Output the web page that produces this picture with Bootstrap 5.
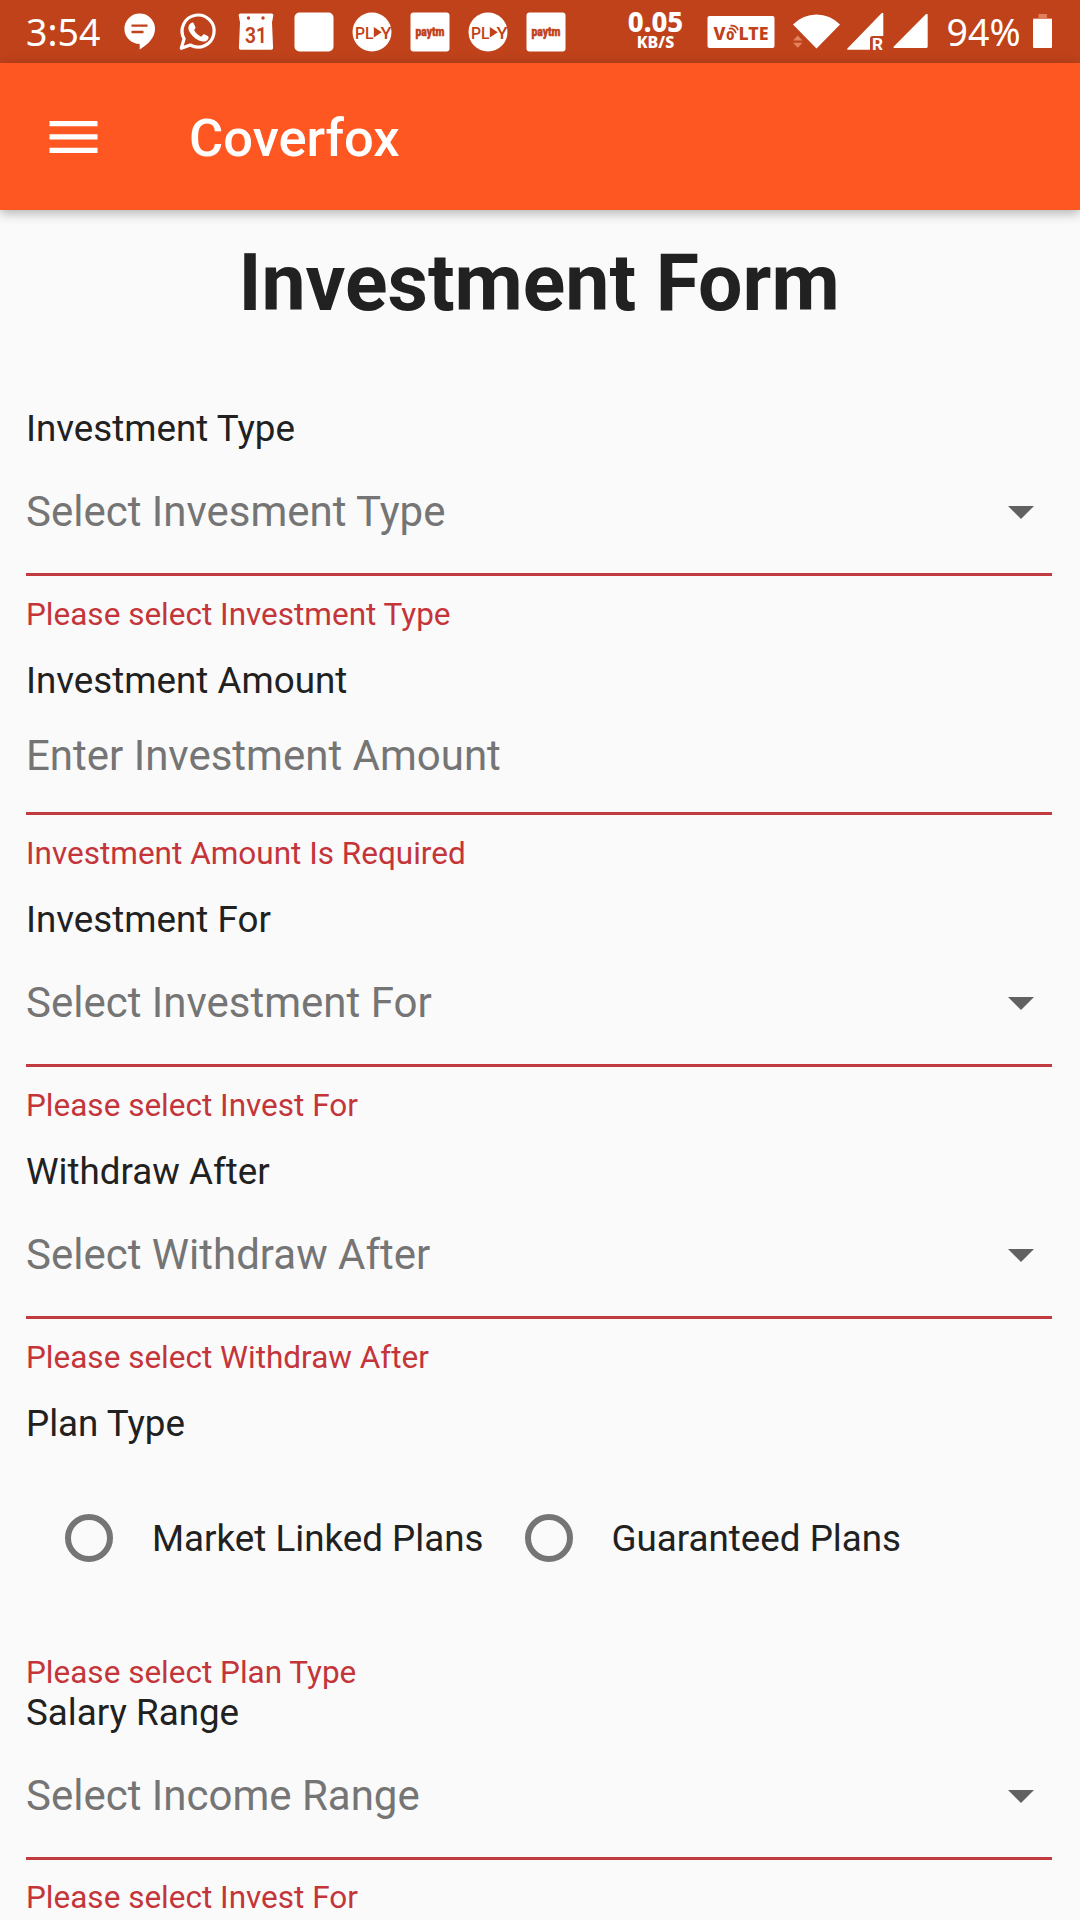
<!DOCTYPE html>
<html lang="en">
<head>
<meta charset="utf-8">
<meta name="viewport" content="width=device-width, initial-scale=1">
<title>Coverfox</title>
<link href="https://cdn.jsdelivr.net/npm/bootstrap@5.3.0/dist/css/bootstrap.min.css" rel="stylesheet">
<style>
  body { font-family: Roboto, "Noto Sans", sans-serif; background: #fafafa; color: #212121; height: 1920px; overflow: hidden; }
  svg { display: block; flex: none; }
  .status-bar { height: 63px; background: #bf421b; padding-left: 26px; font-family: "Noto Sans", sans-serif; color: #fff; }
  .clock { font-size: 37.5px; font-weight: 370; line-height: 63px; width: 92.5px; }
  .net-icons { gap: 16px; }
  .rate { width: 66px; margin-left: 56px; padding-bottom: 5px; }
  .rate-num { font-size: 27.5px; font-weight: 800; line-height: 25px; }
  .rate-unit { font-size: 16px; font-weight: 800; line-height: 16px; }
  .charge { font-size: 37.5px; font-weight: 370; line-height: 63px; width: 84px; margin-left: 19px; white-space: nowrap; }
  .app-bar { height: 147px; background: #ff5722; box-shadow: 0 3px 11px rgba(0,0,0,.3); padding: 0 0 0 49px; position: relative; }
  .app-title { font-size: 52.5px; font-weight: 500; line-height: 62px; margin-left: 91.5px; padding-top: 2px; color: #fff; }
  .form-body { padding: 27px 28px 0 26px; }
  .form-title { font-size: 78.75px; font-weight: 700; line-height: 92px; margin-bottom: 78px; }
  .field-label, .choice-label { font-size: 36.75px; line-height: 43px; font-weight: 400; }
  .field-control { border-bottom: 3px solid #c13b40; padding: 37px 18px 37px 0; color: #757575; font-size: 42px; line-height: 49px; }
  .field-control.entry { padding: 29px 18px 32px 0; }
  .field-error { font-size: 31.5px; line-height: 37px; margin-top: 20px; margin-bottom: 26px; color: #c4353a; }
  .field-error.last { margin-top: 19px; }
  .caret { width: 26px; height: 13px; margin-top: 2px; }
  .choices { height: 209px; padding: 0 0 0 39px; }
  .choice { width: 459.5px; padding-top: 69px; }
  .choice-label { padding-top: 3px; }
  .choice .form-check-input { width: 48px; height: 48px; border: 6px solid #757575; margin: 0 39px 0 0; float: none; background: transparent; }
</style>
</head>
<body>
<svg width="0" height="0" class="position-absolute">
  <defs>
    <g id="play-badge">
      <circle cx="21" cy="21" r="19.5" fill="#fff"/>
      <g fill="#bf421b" font-family="Roboto, sans-serif" font-size="17" font-weight="500">
        <text x="4" y="27.5" textLength="18.5" lengthAdjust="spacingAndGlyphs">PL</text>
        <text x="29.5" y="27.5" textLength="11" lengthAdjust="spacingAndGlyphs">Y</text>
      </g>
      <path d="M22.800 16l8 5.200-8 5.200z" fill="#bf421b"/>
    </g>
    <g id="paytm-badge">
      <rect x="1.5" y="1.5" width="39" height="39" rx="3" fill="#fff"/>
      <text x="6.5" y="24.5" fill="#bf421b" stroke="#bf421b" stroke-width=".5" font-family="Roboto, sans-serif" font-size="13.500" font-weight="900" textLength="29" lengthAdjust="spacingAndGlyphs">paytm</text>
    </g>
  </defs>
</svg>

<div class="status-bar d-flex align-items-center">
  <span class="clock">3:54</span>
  <div class="net-icons d-flex align-items-center">
    <svg width="42" height="42" viewBox="0 0 42 42"><path d="M20.700 2.500a15.300 15.300 0 0 1 15.300 15.300c0 8.200-6 15.200-15.300 20.700v-5.400a15.300 15.300 0 0 1 0-30.600z" fill="#fff"/><path d="M12.500 14.600h16M12.500 21h12" stroke="#bf421b" stroke-width="2.400"/></svg>
    <svg width="42" height="42" viewBox="0 0 42 42"><path d="M4.300 37.300l2.800-9.500a16 16 0 1 1 6.200 6.200z" fill="none" stroke="#fff" stroke-width="3.200" stroke-linejoin="round"/><path d="M13.800 12.200c1-.9 2.500-.9 3 .2l1.600 3.800c.3.700-.2 1.500-1.400 2.900 1.900 3.300 4.100 5.200 7.200 6.600 1.600-1.900 2.200-2.800 3.100-2.400l3.800 1.900c.9.500.4 2.700-.6 3.800-2 2-5 2.100-8.600.5-5-2.100-8.400-6.100-10-9.900-1.200-2.900-.4-5.800 1.900-7.400z" fill="#fff"/></svg>
    <svg width="42" height="42" viewBox="0 0 42 42"><path d="M5.500 2.500h31a1.800 1.800 0 0 1 1.800 2l-1.300 7 1.100 25.500a1.800 1.800 0 0 1-1.800 1.800h-30.600a1.800 1.800 0 0 1-1.800-1.800l1.100-25.500-1.300-7a1.800 1.800 0 0 1 1.800-2z" fill="#fff"/><circle cx="13.500" cy="7" r="1.700" fill="#bf421b"/><circle cx="28" cy="7" r="1.700" fill="#bf421b"/><text x="10" y="31.500" fill="#bf421b" font-family="Roboto, sans-serif" font-size="22" font-weight="600" textLength="22" lengthAdjust="spacingAndGlyphs">31</text></svg>
    <svg width="42" height="42" viewBox="0 0 42 42"><rect x="1.500" y="1.500" width="39" height="39" rx="5" fill="#fff"/></svg>
    <svg width="42" height="42" viewBox="0 0 42 42"><use href="#play-badge"/></svg>
    <svg width="42" height="42" viewBox="0 0 42 42"><use href="#paytm-badge"/></svg>
    <svg width="42" height="42" viewBox="0 0 42 42"><use href="#play-badge"/></svg>
    <svg width="42" height="42" viewBox="0 0 42 42"><use href="#paytm-badge"/></svg>
  </div>
  <div class="rate d-flex flex-column text-center">
    <span class="rate-num">0.05</span>
    <span class="rate-unit">KB/S</span>
  </div>
  <svg width="86" height="63" viewBox="0 0 86 63"><g transform="translate(18.500 0)"><rect x="0" y="16" width="67" height="32" rx="2" fill="#fff"/><g fill="#bf421b" font-family="'Noto Sans', sans-serif" font-weight="800" font-size="18.500"><text x="6" y="39.500" textLength="12" lengthAdjust="spacingAndGlyphs">V</text><text x="18.500" y="39.500" font-size="15" textLength="8.500" lengthAdjust="spacingAndGlyphs">o</text><text x="31" y="39.500" textLength="30" lengthAdjust="spacingAndGlyphs">LTE</text></g><path d="M21.500 29q4-2 7 4M23 25.700q6-.5 7.500 4.500" fill="none" stroke="#bf421b" stroke-width="1.700"/></g></svg>
  <svg width="153" height="63" viewBox="775 0 153 63">
    <path d="M816.500 48.500L793 24.500Q803 14.500 816.500 14.500T840 24.500Z" fill="#fff"/>
    <path d="M793 40.500l4.700-5 4.700 5zM793 42.800h9.400l-4.700 5z" fill="#e3835f"/>
    <path d="M882 12.700l1.300.6v22.700h-10.500q-2.800 0-2.800 2.800v11h-22q-1.500-.2-.6-1.400z" fill="#fff"/>
    <text x="872" y="49.500" fill="#fff" font-family="Roboto, sans-serif" font-size="17" font-weight="700" textLength="11" lengthAdjust="spacingAndGlyphs">R</text>
    <path d="M926.300 13.800l1.400.6v32.500l-1 1.100h-32.500q-1.400-.3-.4-1.500z" fill="#fff"/>
  </svg>
  <span class="charge">94%</span>
  <svg width="22" height="63" viewBox="1031 0 22 63"><path d="M1038.500 14h8.500v4h5v2h-19v-2h5.500z" fill="#df7f5c"/><rect x="1033" y="19" width="19" height="29" rx="1" fill="#fff"/></svg>
</div>

<header class="app-bar d-flex align-items-center">
  <svg width="48.500" height="32" viewBox="0 0 48.500 32"><path d="M.5 0h48v5.300h-48zM.5 13.300h48v5.300h-48zM.5 26.700h48v5.300h-48z" fill="#fff"/></svg>
  <span class="app-title">Coverfox</span>
</header>

<main class="form-body">
  <h1 class="form-title text-center">Investment Form</h1>

  <div class="field-label">Investment Type</div>
  <div class="field-control d-flex justify-content-between align-items-center">Select Invesment Type<svg class="caret" viewBox="0 0 26 13"><path d="M0 0h26L13 13z" fill="#616161"/></svg></div>
  <div class="field-error">Please select Investment Type</div>

  <div class="field-label">Investment Amount</div>
  <div class="field-control entry">Enter Investment Amount</div>
  <div class="field-error">Investment Amount Is Required</div>

  <div class="field-label">Investment For</div>
  <div class="field-control d-flex justify-content-between align-items-center">Select Investment For<svg class="caret" viewBox="0 0 26 13"><path d="M0 0h26L13 13z" fill="#616161"/></svg></div>
  <div class="field-error">Please select Invest For</div>

  <div class="field-label">Withdraw After</div>
  <div class="field-control d-flex justify-content-between align-items-center">Select Withdraw After<svg class="caret" viewBox="0 0 26 13"><path d="M0 0h26L13 13z" fill="#616161"/></svg></div>
  <div class="field-error">Please select Withdraw After</div>

  <div class="field-label">Plan Type</div>
  <div class="choices d-flex align-items-start">
    <label class="choice d-flex align-items-start"><input class="form-check-input flex-shrink-0" type="radio" name="plan"><span class="choice-label">Market Linked Plans</span></label>
    <label class="choice d-flex align-items-start"><input class="form-check-input flex-shrink-0" type="radio" name="plan"><span class="choice-label">Guaranteed Plans</span></label>
  </div>
  <div class="field-error my-0">Please select Plan Type</div>

  <div class="field-label">Salary Range</div>
  <div class="field-control d-flex justify-content-between align-items-center">Select Income Range<svg class="caret" viewBox="0 0 26 13"><path d="M0 0h26L13 13z" fill="#616161"/></svg></div>
  <div class="field-error last mb-0">Please select Invest For</div>
</main>
<script src="https://cdn.jsdelivr.net/npm/bootstrap@5.3.0/dist/js/bootstrap.bundle.min.js"></script>
</body>
</html>
